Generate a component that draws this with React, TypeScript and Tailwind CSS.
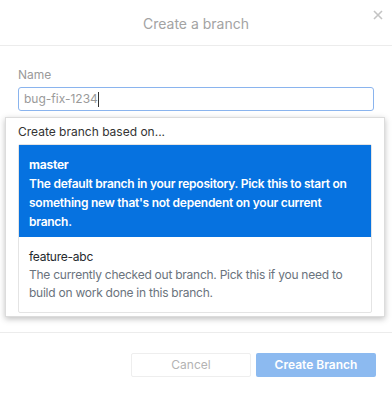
import React from "react";

export default function App() {
  const font = { fontFamily: "Inter, 'Noto Sans', sans-serif" };
  return (
    <div className="relative w-[392px] h-[393px] bg-white overflow-hidden" style={font}>
      <div className="relative h-[46px] border-b border-[#ececec] flex items-center justify-center">
        <span className="text-[14px] text-[#a3a3a3] pt-[1px]">Create a branch</span>
        <svg className="absolute right-[9px] top-[10px]" width="10" height="10" viewBox="0 0 10 10">
          <path d="M1 1L9 9M9 1L1 9" stroke="#c4c4c4" strokeWidth="1.6" />
        </svg>
      </div>
      <div className="h-[286px] px-[18px] pt-[22px]">
        <div className="text-[12px] text-[#9a9a9a] leading-[14px]">Name</div>
        <div className="mt-[5px] h-[24px] border border-[#8ab4ee] rounded-[3px] flex items-center px-[5px]">
          <span className="text-[12px] text-[#9a9a9a]">bug-fix-1234</span>
          <span className="w-px h-[15px] bg-[#333]" />
        </div>
      </div>
      <div className="border-t border-[#ececec] h-[60px] flex items-start justify-end gap-[5px] pr-[16px] pt-[20px]">
        <div className="w-[120px] h-[24px] border border-[#eeeeee] rounded-[2px] flex items-center justify-center text-[12px] text-[#b3b3b3]">Cancel</div>
        <div className="w-[120px] h-[24px] rounded-[2px] bg-[#8cbaf0] flex items-center justify-center text-[12px] font-semibold text-white">Create Branch</div>
      </div>
      <div className="absolute left-[5px] top-[117px] w-[380px] h-[200px] bg-white border border-[#dcdcdc] shadow-[0_2px_6px_rgba(0,0,0,0.25)] px-[12px]">
        <div className="h-[26px] flex items-center text-[12px] text-[#333] pt-[2px]">Create branch based on...</div>
        <div className="border border-[#e4e4e4] rounded-[2px] tracking-[-0.25px]">
          <div className="bg-[#0672e0] pl-[10px] pr-[8px] pt-[10px] pb-[6px] text-white">
            <div className="text-[12px] font-bold leading-[19px]">master</div>
            <div className="text-[12px] font-semibold leading-[19px]">
              The default branch in your repository. Pick this to start on something new that's not dependent on your current branch.
            </div>
          </div>
          <div className="pl-[10px] pr-[8px] pt-[11px] pb-[10px]">
            <div className="text-[12px] text-[#24292e] leading-[18px]">feature-abc</div>
            <div className="text-[12px] text-[#6a737d] leading-[18px]">
              The currently checked out branch. Pick this if you need to build on work done in this branch.
            </div>
          </div>
        </div>
      </div>
    </div>
  );
}
